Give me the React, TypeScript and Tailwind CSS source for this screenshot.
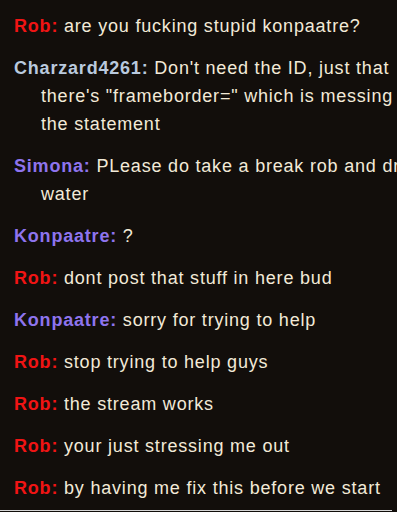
const messages = [
  { name: "Rob", color: "text-[#f01414]", text: "are you fucking stupid konpaatre?" },
  { name: "Charzard4261", color: "text-[#b9c9de]", text: 'Don\'t need the ID, just that there\'s "frameborder=" which is messing up the statement' },
  { name: "Simona", color: "text-[#8e74ee]", text: "PLease do take a break rob and drink water" },
  { name: "Konpaatre", color: "text-[#8e74ee]", text: "?" },
  { name: "Rob", color: "text-[#f01414]", text: "dont post that stuff in here bud" },
  { name: "Konpaatre", color: "text-[#8e74ee]", text: "sorry for trying to help" },
  { name: "Rob", color: "text-[#f01414]", text: "stop trying to help guys" },
  { name: "Rob", color: "text-[#f01414]", text: "the stream works" },
  { name: "Rob", color: "text-[#f01414]", text: "your just stressing me out" },
  { name: "Rob", color: "text-[#f01414]", text: "by having me fix this before we start" },
];

export default function App() {
  return (
    <div className="w-[397px] h-[512px] overflow-hidden bg-[#120e0b] font-['Liberation_Sans',Arial,sans-serif]">
      <div className="w-[436px] pl-[14px] pt-3 pb-2 flex flex-col gap-[14px]">
        {messages.map((m, i) => (
          <p
            key={`msg-${i}`}
            className="pl-[27px] -indent-[27px] text-[18px] tracking-[0.8px] leading-[28px] text-[#f2ead8]"
          >
            <span className={`font-bold ${m.color}`}>{m.name}:</span> {m.text}
          </p>
        ))}
      </div>
      <div className="w-[392px] h-px bg-[#d4d4d4]" />
    </div>
  );
}
